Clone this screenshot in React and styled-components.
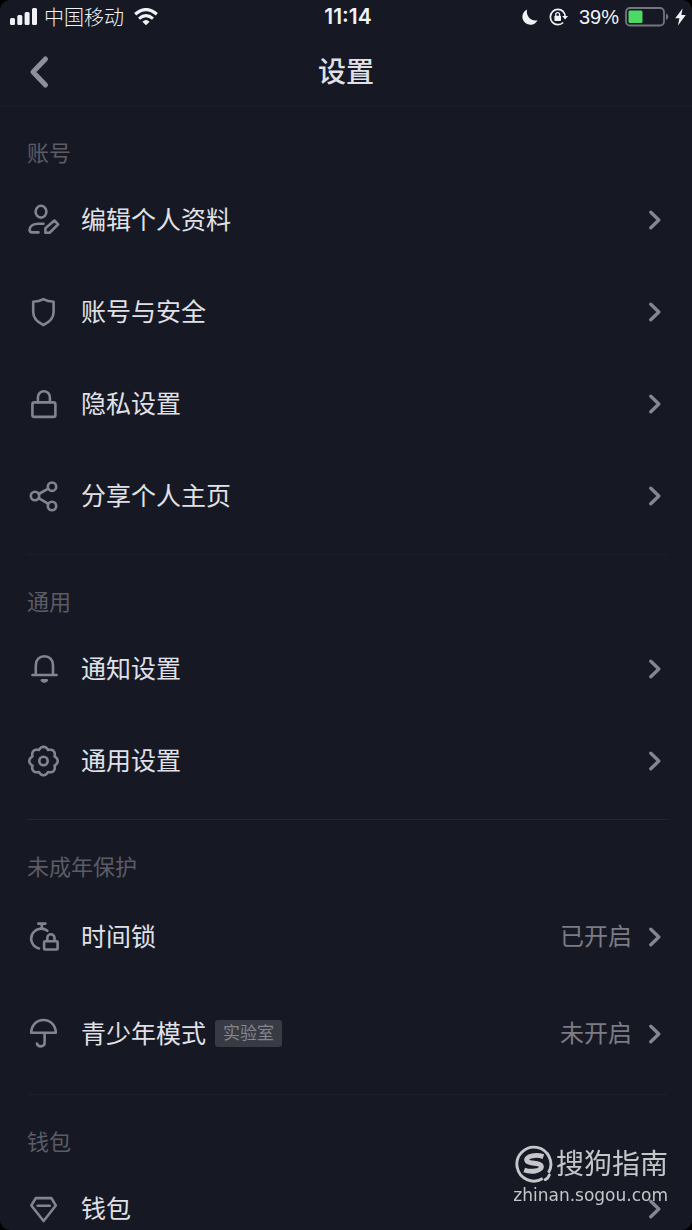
import React from "react";
import styled, { createGlobalStyle } from "styled-components";

const GlobalStyle = createGlobalStyle`
  * {
    box-sizing: border-box;
  }

  body {
    margin: 0;
    background: #000;
    font-family: Inter, "Noto Sans CJK SC", sans-serif;
  }
`;

const Screen = styled.div`
  display: flex;
  flex-direction: column;
  height: 100vh;
  overflow: hidden;
  border-radius: 10px;
  background: #161924;
  color: #e0e1e8;
`;

const StatusBar = styled.div`
  display: grid;
  grid-template-columns: 1fr auto 1fr;
  align-items: center;
  flex: none;
  height: 34px;
  padding: 0 6px 0 10px;
  color: #f1f2f6;
  font-size: 20px;
  line-height: 24px;
`;

const StatusGroup = styled.div`
  display: flex;
  align-items: center;
  justify-content: ${({ $end }) => ($end ? "flex-end" : "flex-start")};
  gap: ${({ $gap }) => $gap}px;
`;

const Carrier = styled.span`
  margin: 2px 4px 0 0;
  font-weight: 300;
`;

const Time = styled.time`
  font-size: 21px;
  font-weight: 600;
`;

const Percent = styled.span`
  font-family: "Liberation Sans", Arial, sans-serif;
`;

const NavBar = styled.header`
  display: grid;
  grid-template-columns: 1fr auto 1fr;
  align-items: center;
  flex: none;
  height: 73px;
  padding: 3px 27px 0;
  border-bottom: 1px solid #1b1e29;
`;

const BackButton = styled.button`
  display: flex;
  justify-self: start;
  padding: 0;
  border: 0;
  background: none;
  color: #8e8f9b;
`;

const Title = styled.h1`
  margin: 0;
  font-size: 28px;
  font-weight: 500;
  line-height: 36px;
`;

const Content = styled.main`
  flex: 1;
  min-height: 0;
  overflow-y: auto;
  scrollbar-width: none;
`;

const Section = styled.section`
  margin: 0 25px 0 27px;
  padding: 35px 0 12px;
  border-bottom: 1px solid ${({ $strong }) => ($strong ? "#242731" : "#1c1f2a")};

  & + & {
    padding-top: 36px;
  }
`;

const SectionTitle = styled.h2`
  margin: 0 0 10px;
  color: #5b5c65;
  font-size: 22px;
  font-weight: 400;
  line-height: 22px;
`;

const List = styled.ul`
  margin: 0;
  padding: 0;
  list-style: none;
`;

const Row = styled.a`
  display: flex;
  align-items: center;
  height: ${({ $tall }) => ($tall ? 97 : 92)}px;
  color: inherit;
  text-decoration: none;
`;

const RowIcon = styled.svg`
  flex: none;
  width: 34px;
  height: 34px;
  margin-right: 20px;
  fill: none;
  stroke: #83848d;
  stroke-width: 2.6;
  stroke-linecap: round;
  stroke-linejoin: round;
`;

const Label = styled.span`
  font-size: 25px;
  line-height: 36px;
`;

const Badge = styled.span`
  margin-left: 9px;
  padding: 0 8px;
  border-radius: 3px;
  background: #383a44;
  color: #84858d;
  font-size: 17px;
  line-height: 27px;
`;

const Value = styled.span`
  margin-left: auto;
  color: #7b7c84;
  font-size: 24px;
  line-height: 36px;
`;

const Chevron = styled.svg`
  flex: none;
  width: 18px;
  height: 24px;
  margin-left: ${({ $afterValue }) => ($afterValue ? "17px" : "auto")};
  fill: none;
  stroke: #858690;
  stroke-width: 3.3;
  stroke-linecap: round;
  stroke-linejoin: round;
`;

const Watermark = styled.div`
  position: fixed;
  right: 24px;
  bottom: 24px;
  display: flex;
  flex-direction: column;
  align-items: flex-end;
  color: #c4c6c9;
  pointer-events: none;
`;

const WatermarkBrand = styled.div`
  display: flex;
  align-items: center;
  gap: 3px;
  font-size: 28px;
  line-height: 40px;
`;

const WatermarkUrl = styled.div`
  font-family: "DejaVu Sans", sans-serif;
  font-size: 17px;
  line-height: 22px;
`;

// eight rounded teeth around the centre
const gearPath = () => {
  const points = [];
  for (let i = 0; i < 96; i++) {
    const a = (i / 96) * Math.PI * 2;
    const r = 11.9 + 2.3 * Math.abs(Math.cos(4 * a));
    points.push(
      `${(16.5 + r * Math.cos(a)).toFixed(2)} ${(17 + r * Math.sin(a)).toFixed(2)}`
    );
  }
  return `M${points.join("L")}Z`;
};

const icons = {
  profile: (
    <>
      <ellipse cx="14" cy="8.7" rx="5.4" ry="5.9" />
      <path d="M16.5 20.7H11.5C5.6 20.7 2.6 23.6 2.6 27c0 1.5 1 2.4 2.6 2.4H11.5" />
      <path d="M18.4 29.7V25.2L27.4 17.5L31.2 21.3L22.6 29.7Z" />
    </>
  ),
  shield: (
    <path d="M16.4 4.2C13.2 6 10 6.6 6.2 6.8V17C6.2 23 10 27 16.4 30C22.8 27 26.6 23 26.6 17V6.8C22.8 6.6 19.6 6 16.4 4.2Z" />
  ),
  lock: (
    <>
      <rect x="5.4" y="15.4" width="23" height="14.5" rx="2" />
      <path d="M10.9 15.2V10.2a6 6 0 0 1 12 0V15.2" />
    </>
  ),
  share: (
    <>
      <circle cx="8" cy="17" r="4.2" />
      <circle cx="25" cy="7.7" r="4.2" />
      <circle cx="25" cy="27" r="4.2" />
      <path d="M11.7 15L21.3 9.7M11.7 19.1L21.3 24.9" />
    </>
  ),
  bell: (
    <>
      <path d="M8.8 22.6V13.2C8.8 7.8 12.4 4.2 17.4 4.2S26 7.8 26 13.2V22.6" />
      <path d="M5.4 23H29.6" />
      <path d="M14.8 28.4H19.8Q19 29.6 17.3 29.6T14.8 28.4Z" />
    </>
  ),
  gear: (
    <>
      <path d={gearPath()} />
      <circle cx="16.5" cy="17" r="4.2" />
    </>
  ),
  timer: (
    <>
      <path d="M11.3 3.6H18.4M14.8 3.6V8" />
      <path d="M20.4 10.8A10 10 0 1 0 12 28.4" />
      <rect x="17.1" y="21.2" width="13.5" height="8.3" rx="1" />
      <path d="M20.3 21V17.9a3.6 3.6 0 0 1 7.2 0V21" />
    </>
  ),
  umbrella: (
    <>
      <path d="M4.2 15.8C4.2 8.5 9.6 3 16.5 3S28.8 8.5 28.8 15.8Z" />
      <path d="M17.6 16V25.6C17.6 28.2 15.8 29.4 13.7 29.4S10.4 28.2 10 26.6" />
    </>
  ),
  diamond: (
    <>
      <path d="M8.8 6.1H24.4L28.8 13.5L16.6 29L4.3 13.5Z" />
      <path d="M10.6 13.7H22.8" />
    </>
  ),
};

const sections = [
  {
    title: "账号",
    rows: [
      { icon: "profile", label: "编辑个人资料" },
      { icon: "shield", label: "账号与安全" },
      { icon: "lock", label: "隐私设置" },
      { icon: "share", label: "分享个人主页" },
    ],
  },
  {
    title: "通用",
    strong: true,
    rows: [
      { icon: "bell", label: "通知设置" },
      { icon: "gear", label: "通用设置" },
    ],
  },
  {
    title: "未成年保护",
    rows: [
      { icon: "timer", label: "时间锁", value: "已开启" },
      { icon: "umbrella", label: "青少年模式", badge: "实验室", value: "未开启" },
    ],
  },
  {
    title: "钱包",
    rows: [{ icon: "diamond", label: "钱包" }],
  },
];

const Signal = () => (
  <svg width="28" height="18" viewBox="0 0 28 18" fill="currentColor">
    <rect x="0" y="10" width="5" height="7" rx="1.5" />
    <rect x="7.3" y="7" width="5" height="10" rx="1.5" />
    <rect x="14.6" y="4" width="5" height="13" rx="1.5" />
    <rect x="22" y="0" width="5" height="17" rx="1.5" />
  </svg>
);

const Wifi = () => (
  <svg width="24" height="18" viewBox="0 0 24 18" fill="none" stroke="currentColor">
    <path d="M1.2 6.3Q12 -3.1 22.8 6.3" strokeWidth="3.2" />
    <path d="M5 10.6Q12 4.6 19 10.6" strokeWidth="3" />
    <path d="M8.4 13.7Q12 10.2 15.6 13.7L12 17.3Z" fill="currentColor" stroke="none" />
  </svg>
);

const Moon = () => (
  <svg width="16" height="16" viewBox="0 0 16 16" fill="currentColor">
    <path d="M5.2.4A8 8 0 1 0 15.6 11.2C9.4 13.2 3.3 7 5.2.4Z" />
  </svg>
);

const RotationLock = () => (
  <svg width="19" height="18" viewBox="0 0 19 18" fill="none" stroke="currentColor">
    <path d="M14.3 3.6A7.6 7.6 0 1 0 14.2 14.5" strokeWidth="1.7" />
    <path d="M13.4 2.8A7.6 7.6 0 0 1 16.2 8.5" strokeWidth="1.7" />
    <path d="M13.2 8H19L16.1 11.6Z" fill="currentColor" stroke="none" />
    <rect x="5.4" y="7.8" width="6.6" height="5.2" rx=".7" fill="currentColor" stroke="none" />
    <path d="M6.8 8V6.5a1.9 1.9 0 0 1 3.8 0V8" strokeWidth="1.3" />
  </svg>
);

const Battery = () => (
  <svg width="44" height="20" viewBox="0 0 44 20" fill="none">
    <rect x="1" y="1" width="38" height="17.5" rx="4" stroke="#74767e" strokeWidth="1.8" />
    <rect x="3.5" y="3.5" width="14" height="12.5" rx="1.5" fill="#4cd964" />
    <path d="M41 6.5Q43.3 7.5 43.3 9.8T41 13Z" fill="#74767e" />
  </svg>
);

const Bolt = () => (
  <svg width="11" height="18" viewBox="0 0 11 18" fill="currentColor">
    <path d="M7.6 .5L.2 10.2H4.4L3 17.4L10.8 7H6.4Z" />
  </svg>
);

const SogouMark = () => (
  <svg width="38" height="38" viewBox="0 0 38 38" fill="none" stroke="currentColor">
    <path d="M27.8 33.6A17 17 0 1 1 33.5 27.8" strokeWidth="2.9" />
    <path d="M30.3 34.6Q33.4 33 34.3 30" strokeWidth="2.9" strokeLinecap="round" />
    <path
      d="M28.4 11.6C24.6 10.4 20.6 10.2 17.4 10.8C12.6 11.6 10.6 14.2 12.2 16.2C14.4 18.9 24.2 17.6 26 20.4C27.4 22.8 24.6 25.4 20.2 26C16.4 26.5 12.6 26.2 9.2 24.9"
      strokeWidth="4.8"
    />
  </svg>
);

const SettingRow = ({ icon, label, badge, value }) => (
  <li>
    <Row href="#" $tall={Boolean(value)}>
      <RowIcon viewBox="0 0 34 34" aria-hidden="true">
        {icons[icon]}
      </RowIcon>
      <Label>{label}</Label>
      {badge && <Badge>{badge}</Badge>}
      {value && <Value>{value}</Value>}
      <Chevron viewBox="0 0 18 24" $afterValue={Boolean(value)} aria-hidden="true">
        <path d="M1.8 4.2L9.8 12L1.8 19.8" />
      </Chevron>
    </Row>
  </li>
);

const App = () => {
  return (
    <>
      <GlobalStyle />
      <Screen>
        <StatusBar>
          <StatusGroup $gap={6}>
            <Signal />
            <Carrier>中国移动</Carrier>
            <Wifi />
          </StatusGroup>
          <Time>11:14</Time>
          <StatusGroup $gap={6} $end>
            <StatusGroup $gap={11}>
              <Moon />
              <RotationLock />
              <Percent>39%</Percent>
            </StatusGroup>
            <Battery />
            <Bolt />
          </StatusGroup>
        </StatusBar>
        <NavBar>
          <BackButton type="button" aria-label="返回">
            <svg width="24" height="36" viewBox="0 0 24 36" fill="none">
              <path
                d="M18.5 5L6 18L18.5 31"
                stroke="currentColor"
                strokeWidth="5"
                strokeLinecap="round"
                strokeLinejoin="round"
              />
            </svg>
          </BackButton>
          <Title>设置</Title>
        </NavBar>
        <Content>
          {sections.map(({ title, strong, rows }) => (
            <Section key={title} $strong={strong}>
              <SectionTitle>{title}</SectionTitle>
              <List>
                {rows.map((row) => (
                  <SettingRow key={row.label} {...row} />
                ))}
              </List>
            </Section>
          ))}
        </Content>
        <Watermark>
          <WatermarkBrand>
            <SogouMark />
            <span>搜狗指南</span>
          </WatermarkBrand>
          <WatermarkUrl>zhinan.sogou.com</WatermarkUrl>
        </Watermark>
      </Screen>
    </>
  );
};

export default App;
